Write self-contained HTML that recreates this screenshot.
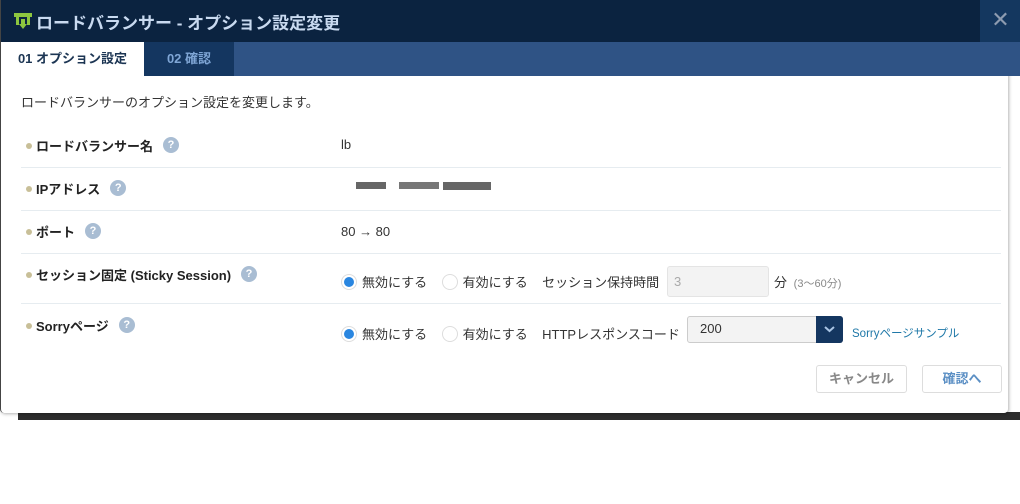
<!DOCTYPE html>
<html><head><meta charset="utf-8"><style>
*{margin:0;padding:0;box-sizing:border-box}
body{width:1020px;height:504px;background:#fff;font-family:"Liberation Sans","Noto Sans CJK JP",sans-serif;position:relative;overflow:hidden;color:#333}
.bar{position:absolute;left:18px;top:412px;width:1002px;height:8px;background:#2d2d2d}
.modal{position:absolute;left:0;top:0;width:1008px;height:413px;background:#fff;border-radius:0 0 4px 4px;box-shadow:1px 1px 3px rgba(0,0,0,.3);border-left:1px solid #444}
.hd{height:42px;background:#0b2340;position:relative;width:1020px}
.hd .t{position:absolute;left:35px;top:9px;color:#c9daf0;font-size:17px;font-weight:bold}
.close{position:absolute;left:979px;top:0;width:41px;height:42px;background:#14375f;color:#8d9bb0;font-size:22px;text-align:center;line-height:40px}
.tabs{height:34px;background:#2f5385;position:relative;width:1020px}
.tab{position:absolute;top:0;height:34px;line-height:34px;font-size:13px;font-weight:bold;text-align:center}
.row{position:absolute;left:20px;width:980px;border-bottom:1px solid #e6ecf0}
.lbl{position:absolute;left:5px;font-size:13px;font-weight:bold;color:#222}
.lbl:before{content:"";display:inline-block;width:6px;height:6px;border-radius:50%;background:#c8bf98;margin-right:4px;vertical-align:2px}
.q{display:inline-block;width:16px;height:16px;border-radius:50%;background:#a9bdd3;color:#fff;font-size:11px;text-align:center;line-height:16px;margin-left:10px;position:relative;top:-3px;vertical-align:middle}
.v{position:absolute;font-size:13px;color:#333}
.r{display:inline-block;width:16px;height:16px;border-radius:50%;border:1px solid #ddd;vertical-align:-3px;margin-right:5px;position:relative}
.r.on:after{content:"";position:absolute;left:2px;top:2px;width:10px;height:10px;border-radius:50%;background:#2a86e0}
.btn{position:absolute;top:365px;height:28px;border:1px solid #ddd;border-radius:3px;font-size:13px;font-weight:bold;text-align:center;line-height:26px;background:#fff}
</style></head><body>
<div class="bar"></div>
<div class="modal">
<div class="hd">
<svg style="position:absolute;left:12px;top:11px" width="20" height="20" viewBox="0 0 20 20"><rect x="1" y="2" width="18" height="4" fill="#8dc63f"/><rect x="3" y="6" width="3" height="8" fill="#8dc63f"/><rect x="14" y="6" width="3" height="8" fill="#8dc63f"/><path d="M8 8v5h-2l4 5 4-5h-2V8z" fill="#8dc63f"/></svg>
<div class="t">ロードバランサー - オプション設定変更</div>
<div class="close">✕</div>
</div>
<div class="tabs">
<div class="tab" style="left:0;width:143px;background:#fff;color:#1c3553">01 オプション設定</div>
<div class="tab" style="left:143px;width:90px;background:#143660;color:#7fa6d6">02 確認</div>
</div>
<div style="position:absolute;left:20px;top:92px;font-size:13px">ロードバランサーのオプション設定を変更します。</div>
<div class="row" style="top:124px;height:44px"><div class="lbl" style="top:12px">ロードバランサー名<span class="q">?</span></div><div class="v" style="left:320px;top:13px">lb</div></div>
<div class="row" style="top:168px;height:43px"><div class="lbl" style="top:11px">IPアドレス<span class="q">?</span></div>
<div class="v" style="left:335px;top:14px;width:30px;height:7px;background:#666"></div>
<div class="v" style="left:378px;top:14px;width:40px;height:7px;background:#777"></div>
<div class="v" style="left:422px;top:14px;width:48px;height:8px;background:#666"></div></div>
<div class="row" style="top:211px;height:43px"><div class="lbl" style="top:11px">ポート<span class="q">?</span></div><div class="v" style="left:320px;top:13px">80 → 80</div></div>
<div class="row" style="top:254px;height:50px"><div class="lbl" style="top:11px">セッション固定 (Sticky Session)<span class="q">?</span></div>
<div class="v" style="left:320px;top:18px"><span class="r on"></span>無効にする&nbsp;&nbsp;&nbsp;&nbsp;<span class="r"></span>有効にする&nbsp;&nbsp;&nbsp;&nbsp;セッション保持時間</div>
<div class="v" style="left:646px;top:12px;width:102px;height:31px;background:#f3f3f3;border:1px solid #e4e4e4;border-radius:3px;color:#aaa;padding:7px 6px">3</div>
<div class="v" style="left:753px;top:18px">分 <span style="font-size:11px;color:#888">&nbsp;(3～60分)</span></div></div>
<div class="row" style="top:304px;height:0;border:none"><div class="lbl" style="top:12px">Sorryページ<span class="q">?</span></div>
<div class="v" style="left:320px;top:20px"><span class="r on"></span>無効にする&nbsp;&nbsp;&nbsp;&nbsp;<span class="r"></span>有効にする&nbsp;&nbsp;&nbsp;&nbsp;HTTPレスポンスコード</div>
<div class="v" style="left:666px;top:12px;width:156px;height:27px;background:#f3f3f3;border:1px solid #ccc;border-radius:3px;padding:4px 12px">200</div>
<div class="v" style="left:795px;top:12px;width:27px;height:27px;background:#143660;border-radius:0 3px 3px 0"><svg width="27" height="27"><path d="M9 11l4.5 4 4.5-4" stroke="#a9c4e4" stroke-width="2" fill="none"/></svg></div>
<div class="v" style="left:831px;top:21px;font-size:11.5px;color:#1f78a8">Sorryページサンプル</div></div>
<div class="btn" style="left:815px;width:91px;color:#888">キャンセル</div>
<div class="btn" style="left:921px;width:80px;color:#5b8fc4">確認へ</div>
</div>
</body></html>
